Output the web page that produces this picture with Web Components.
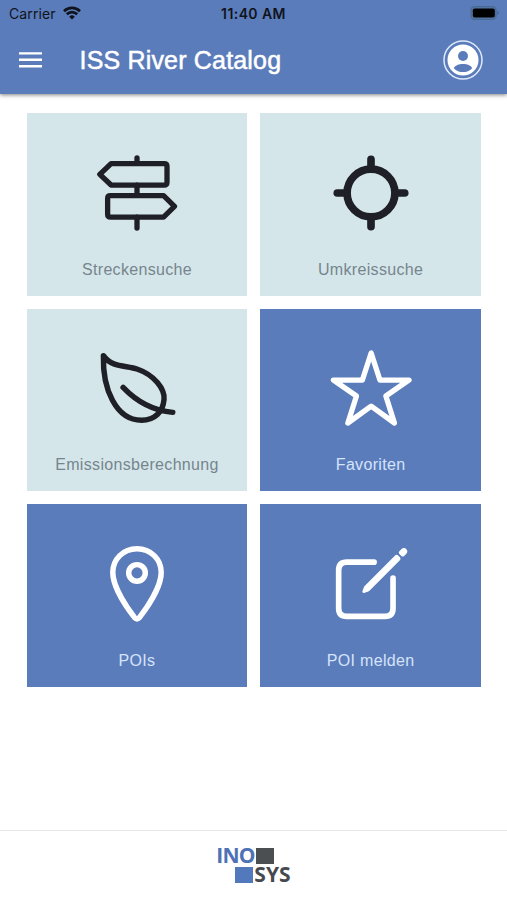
<!DOCTYPE html>
<html lang="de">
<head>
<meta charset="utf-8">
<title>ISS River Catalog</title>
<style>
body { margin: 0; }
</style>
</head>
<body>
<river-app></river-app>

<script>
class StatusBar extends HTMLElement {
    connectedCallback() {
        this.attachShadow({mode: 'open'});
        this.shadowRoot.innerHTML = `<style>
:host {
    display: grid;
    grid-template-columns: 1fr auto 1fr;
    align-items: center;
    height: 27px;
    padding: 0 7px 0 9px;
    box-sizing: border-box;
    font: 14px/27px Inter, sans-serif;
    color: #10131c;
}
.left { display: flex; align-items: center; gap: 7px; }
.carrier { letter-spacing: .1px; }
.time { font-weight: 600; letter-spacing: .42px; margin-right: 2px; }
.battery { justify-self: end; display: block; }
svg { display: block; margin-top: -1px; }
        </style>
        <div class="left"><span class="carrier">Carrier</span>
            <svg width="18" height="14" viewBox="0 0 18 14" fill="none" stroke="#10131c" stroke-width="2.7">
                <path d="M1 5.2a11.3 11.3 0 0 1 16 0M3.8 8.3a7.3 7.3 0 0 1 10.4 0"/>
                <path d="M9 13.6l-2.8-2.9a4 4 0 0 1 5.6 0z" fill="#10131c" stroke="none"/>
            </svg>
        </div>
        <span class="time">11:40 AM</span>
        <svg class="battery" width="30" height="14" viewBox="0 0 30 14">
            <rect x="1" y=".7" width="25" height="12.6" rx="3.6" fill="#5577a8" stroke="#486994" stroke-width="1.3"/>
            <rect x="2.8" y="2.5" width="22" height="9" rx="1.8" fill="#000"/>
            <path d="M27.5 4.8q2.4 2.2 0 4.4z" fill="#3d5d86"/>
        </svg>`;
    }
}

class AppHeader extends HTMLElement {
    connectedCallback() {
        this.attachShadow({mode: 'open'});
        this.shadowRoot.innerHTML = `<style>
:host {
    display: block;
    height: 93.5px;
    background: #5b7cba;
    box-shadow: 0 1px 4px rgba(0, 0, 0, .5);
}
.toolbar {
    display: flex;
    align-items: center;
    height: 66px;
    padding: 0 24px 0 19px;
}
.title {
    flex: 1;
    padding-left: 37.5px;
    font: 25px/30px "Liberation Sans", sans-serif;
    letter-spacing: .18px;
    color: #fff;
    -webkit-text-stroke: .5px #fff;
}
svg { display: block; }
        </style>
        <status-bar></status-bar>
        <div class="toolbar">
            <svg width="23" height="18" viewBox="0 0 23 18" stroke="#fff" stroke-width="2.4"><path d="M0 2.400h23M0 8.800h23M0 15.200h23"/></svg>
            <span class="title"><slot></slot></span>
            <svg width="40" height="40" viewBox="0 0 40 40">
                <circle cx="20" cy="20" r="19" fill="none" stroke="#dfe9fb" stroke-width="1.5"/>
                <circle cx="20" cy="20" r="15.5" fill="#fff"/>
                <circle cx="20" cy="16" r="5" fill="#5b7cba"/>
                <path d="M10.8 28.2C13 22.6 27 22.6 29.2 28.2 24.5 33.4 15.5 33.4 10.8 28.2z" fill="#5b7cba"/>
            </svg>
        </div>`;
    }
}

// 512er Raster, wird auf 80px skaliert
const icons = {
    sign: `<g stroke-width="34"><path d="M256 32v32M256 205v64M256 410v70"/>
        <path d="M90 68H430q18 0 18 18V187q0 18-18 18H90L18 137z"/>
        <path d="M426 273H86q-18 0-18 18V392q0 18 18 18H426L496 342z"/></g>`,
    locate: `<g stroke-width="49"><circle cx="256" cy="256" r="153"/>
        <path d="M256 40v50M256 422v50M40 256h50M422 256h50"/></g>`,
    leaf: `<g stroke-width="35"><path d="M41 49C95 128 190 110 260 136 365 172 436 262 429 330 422 410 370 462 285 463 120 462 35 260 41 49z"/>
        <path d="M167 252Q304 396 485 412"/></g>`,
    star: `<path stroke-width="34" d="M499 205H313L257 32 201 205H15L163 307 108 480 257 372 406 480 351 307z"/>`,
    pin: `<g stroke-width="35"><path d="M256 30c-88 0-155 67-155 152 0 95 98 235 141 291a18 18 0 0 0 28 0C313 417 411 277 411 182 411 97 344 30 256 30z"/>
        <circle cx="256" cy="185" r="53"/></g>`,
    create: `<path stroke-width="36" d="M276 116H101Q49 116 49 168V411Q49 463 101 463H345Q397 463 397 411V218"/>
        <g transform="translate(-22 -22) scale(1.09)" fill="currentColor" stroke-width="7">
        <path d="M460 53a16 16 0 0 0-23-.5L424 65a8 8 0 0 0 0 11l12 12a8 8 0 0 0 11 0l12-12c6-6 7-16 1-23z"/>
        <path d="M399 90L219 270a9 9 0 0 0-2 4l-9 25a4 4 0 0 0 5 5l25-8a9 9 0 0 0 4-3L422 113a9 9 0 0 0 0-13l-10-10a9 9 0 0 0-13 0z"/></g>`
};

class MenuTile extends HTMLElement {
    connectedCallback() {
        this.attachShadow({mode: 'open'});
        this.shadowRoot.innerHTML = `<style>
:host {
    display: flex;
    flex-direction: column;
    align-items: center;
    box-sizing: border-box;
    padding-top: 39.5px;
    background: #d5e6ea;
    color: #1e1f27;
    --label: #76858d;
}
:host([primary]) {
    background: #5b7cba;
    color: #fff;
    --label: #d5e3fb;
}
svg { display: block; overflow: visible; margin-left: 1px; }
.label {
    margin-top: 27px;
    font: 16px/20px "Liberation Sans", sans-serif;
    letter-spacing: .32px;
    color: var(--label);
}
        </style>
        <svg width="80" height="80" viewBox="0 0 512 512" fill="none" stroke="currentColor" stroke-linecap="round" stroke-linejoin="round">${icons[this.getAttribute('icon')]}</svg>
        <span class="label"><slot></slot></span>`;
    }
}

class AppFooter extends HTMLElement {
    connectedCallback() {
        this.attachShadow({mode: 'open'});
        this.shadowRoot.innerHTML = `<style>
:host {
    display: flex;
    justify-content: center;
    box-sizing: border-box;
    height: 70px;
    padding-top: 15px;
    border-top: 1.5px solid #e6e6e6;
    background: #fff;
}
.logo {
    display: grid;
    grid-template-rows: 19px 19px;
    font: 700 21px/19px "Open Sans", sans-serif;
    color: #46494d;
}
.row { display: flex; align-items: center; gap: 1px; }
.row + .row { padding-left: 19px; }
.ino { color: #4d72b5; width: 38.5px; letter-spacing: -.7px; }
.sys { letter-spacing: .1px; }
.box { width: 18px; height: 16px; background: #4b4f52; }
.box.blue { background: #5179bb; }
        </style>
        <div class="logo">
            <div class="row"><span class="ino">INO</span><span class="box"></span></div>
            <div class="row"><span class="box blue"></span><span class="sys">SYS</span></div>
        </div>`;
    }
}

class RiverApp extends HTMLElement {
    connectedCallback() {
        this.attachShadow({mode: 'open'});
        this.shadowRoot.innerHTML = `<style>
:host {
    display: flex;
    flex-direction: column;
    height: 900px;
    background: #fff;
}
main {
    flex: 1;
    display: grid;
    grid-template-columns: 1fr 1fr;
    grid-auto-rows: 182.6px;
    gap: 13px 12.8px;
    padding: 19.8px 26px 0 26.6px;
}
        </style>
        <app-header>ISS River Catalog</app-header>
        <main>
            <menu-tile icon="sign">Streckensuche</menu-tile>
            <menu-tile icon="locate">Umkreissuche</menu-tile>
            <menu-tile icon="leaf">Emissionsberechnung</menu-tile>
            <menu-tile icon="star" primary>Favoriten</menu-tile>
            <menu-tile icon="pin" primary>POIs</menu-tile>
            <menu-tile icon="create" primary>POI melden</menu-tile>
        </main>
        <app-footer></app-footer>`;
    }
}

customElements.define('status-bar', StatusBar);
customElements.define('app-header', AppHeader);
customElements.define('menu-tile', MenuTile);
customElements.define('app-footer', AppFooter);
customElements.define('river-app', RiverApp);
</script>
</body>
</html>
